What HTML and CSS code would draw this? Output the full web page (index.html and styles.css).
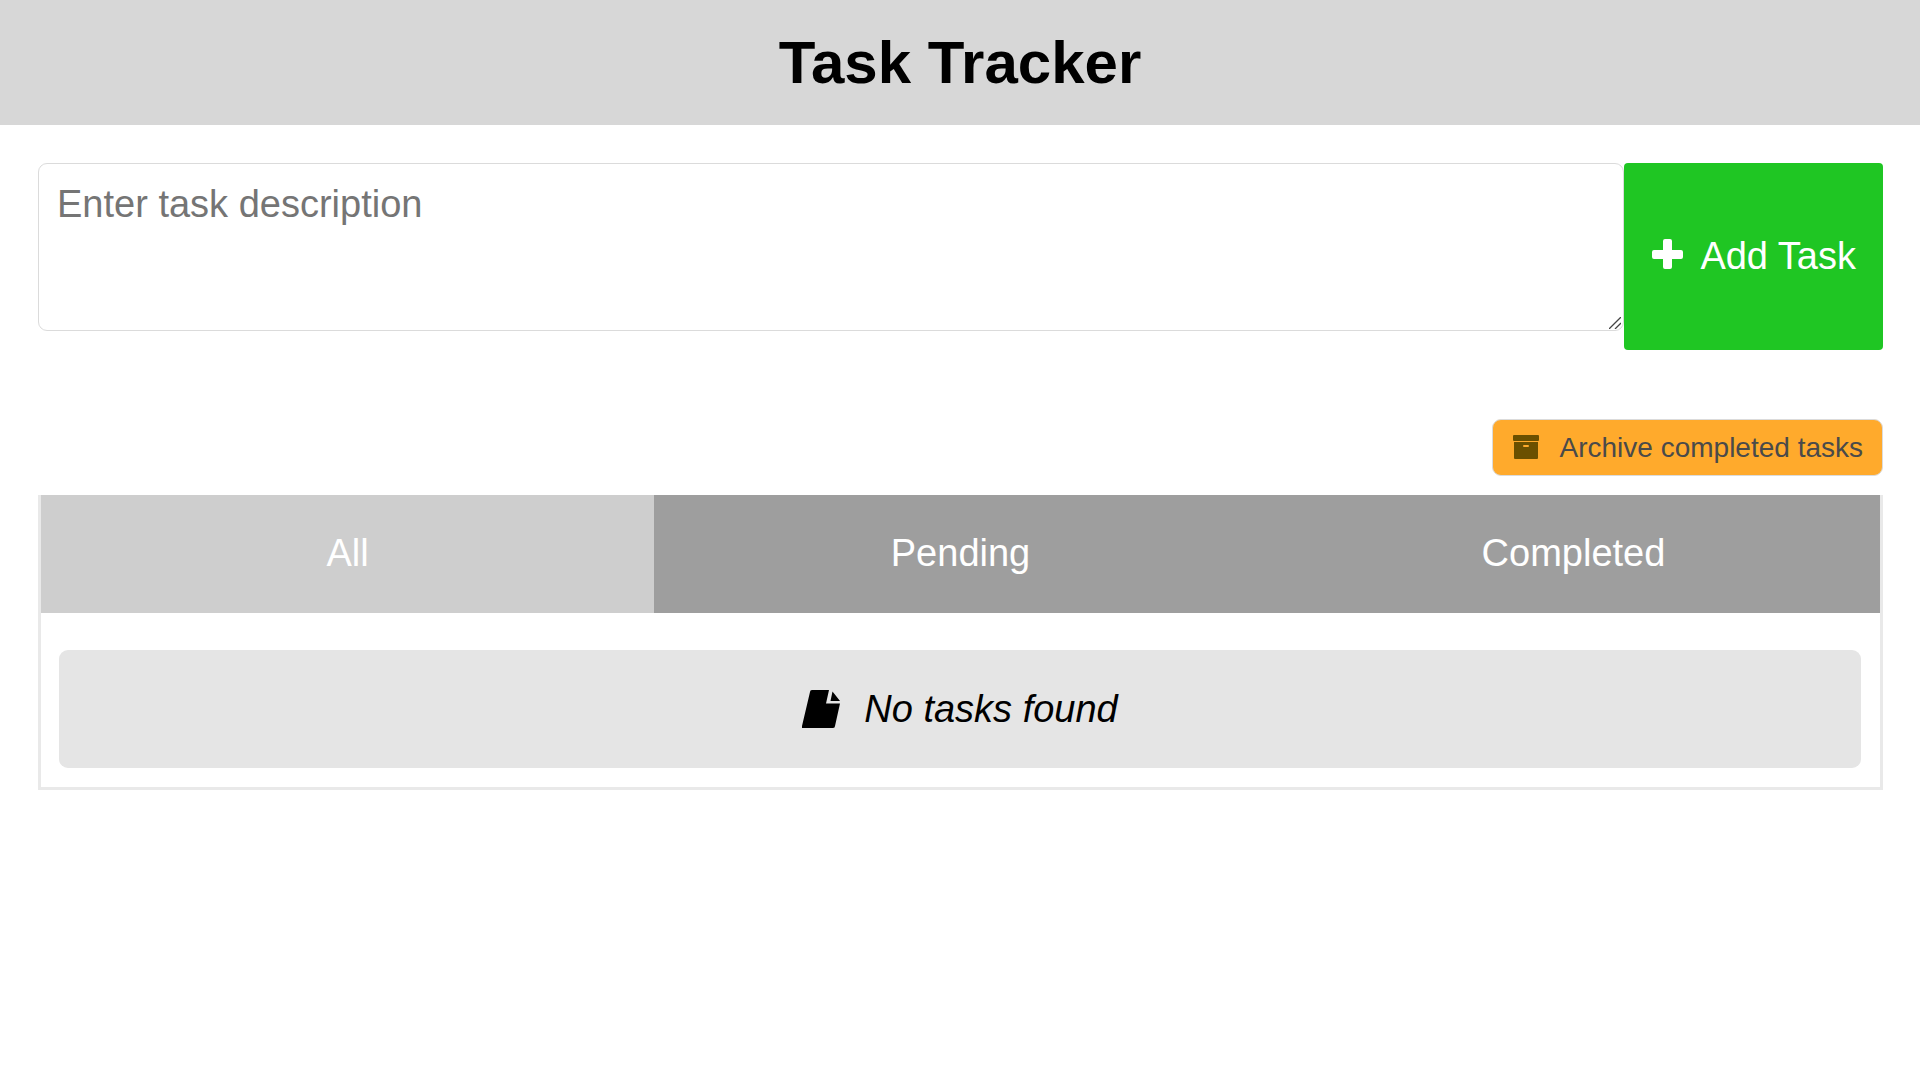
FILE: index.html
```html
<!DOCTYPE html>
<html lang="en">
<head>
<meta charset="utf-8">
<meta name="viewport" content="width=device-width, initial-scale=1">
<title>Task Tracker</title>
<link rel="stylesheet" href="styles.css">
</head>
<body>
<header class="header">
  <h1 class="title">Task Tracker</h1>
</header>
<main class="content">
  <form class="task-form">
    <div class="task-field">
      <textarea class="task-input" aria-label="Task description" placeholder="Enter task description"></textarea>
      <svg class="grip" viewBox="0 0 12 12" aria-hidden="true"><path stroke="currentColor" stroke-width="1.3" fill="none" d="M0 12L12 0M6 12l6-6"/></svg>
    </div>
    <button class="add-button" type="button">
      <svg class="icon-plus" viewBox="0 0 31 30" aria-hidden="true"><path fill="currentColor" d="M13 0h5a2 2 0 0 1 2 2v9h9a2 2 0 0 1 2 2v5a2 2 0 0 1-2 2h-9v8a2 2 0 0 1-2 2h-5a2 2 0 0 1-2-2v-8H2a2 2 0 0 1-2-2v-5a2 2 0 0 1 2-2h9V2a2 2 0 0 1 2-2z"/></svg>
      <span>Add Task</span>
    </button>
  </form>
  <div class="toolbar">
    <button class="archive-button" type="button">
      <svg class="icon-archive" viewBox="0 0 26 24" aria-hidden="true"><path fill="currentColor" fill-rule="evenodd" d="M1 0h24a1 1 0 0 1 1 1v4a1 1 0 0 1-1 1H1a1 1 0 0 1-1-1V1a1 1 0 0 1 1-1zM1 7h24v16a1 1 0 0 1-1 1H2a1 1 0 0 1-1-1zM11 10a1 1 0 0 0 0 2h4a1 1 0 0 0 0-2z"/></svg>
      <span>Archive completed tasks</span>
    </button>
  </div>
  <section class="panel">
    <nav class="tabs">
      <button class="tab tab-active" type="button">All</button>
      <button class="tab" type="button">Pending</button>
      <button class="tab" type="button">Completed</button>
    </nav>
    <div class="panel-body">
      <p class="empty">
        <svg class="icon-file" viewBox="0 0 38 38" aria-hidden="true"><path fill="currentColor" d="M10 0h17l-3 13.500h14l-5 22.500a2 2 0 0 1-2 2H1a1 1 0 0 1-1-2L8 2a2 2 0 0 1 2-2zM30.500 1.500l7.500 9.500h-9.500z"/></svg>
        <span>No tasks found</span>
      </p>
    </div>
  </section>
</main>
</body>
</html>
```
FILE: styles.css
```css
* {
  box-sizing: border-box;
}

body {
  margin: 0;
  background: #fff;
  color: #000;
  font-family: "Liberation Sans", Arial, sans-serif;
  font-size: 38px;
  line-height: 42px;
}

button,
textarea {
  margin: 0;
  font: inherit;
}

svg {
  flex: none;
}

.header {
  padding: 28px 38px;
  background: #d7d7d7;
}

.title {
  margin: 0;
  font-size: 60px;
  line-height: 69px;
  text-align: center;
}

.content {
  padding: 38px 37px 38px 38px;
}

.task-form {
  display: flex;
  align-items: stretch;
}

.task-field {
  position: relative;
  flex: 1;
  min-width: 0;
  padding-bottom: 19px;
}

.task-input {
  display: block;
  width: 100%;
  height: 168px;
  padding: 19px 18px;
  border: 1px solid #dbdbdb;
  border-radius: 9px;
  background: #fff;
  color: #000;
  resize: none;
}

.task-input::placeholder {
  color: #757575;
}

.grip {
  position: absolute;
  right: 3px;
  bottom: 21px;
  width: 12px;
  height: 12px;
  color: #444;
  pointer-events: none;
}

.add-button {
  display: flex;
  align-items: center;
  gap: 17px;
  padding: 0 27px 2px 28px;
  border: 0;
  border-radius: 4px;
  background: #1fc623;
  color: #fff;
  white-space: nowrap;
}

.icon-plus {
  width: 31px;
  height: 30px;
  margin-bottom: 4px;
}

.toolbar {
  display: flex;
  justify-content: flex-end;
  padding: 69px 0 19px;
}

.archive-button {
  display: flex;
  align-items: center;
  gap: 21px;
  padding: 12px 19px 12px 20px;
  border: 1px solid #dbdbdb;
  border-radius: 9px;
  background: #ffaa2c;
  color: #4a4a4a;
  font-size: 28px;
  line-height: 31px;
}

.icon-archive {
  width: 26px;
  height: 24px;
  margin-bottom: 2px;
  color: #6b5000;
}

.panel {
  border: 3px solid #e9e9e9;
  border-top: 0;
}

.tabs {
  display: grid;
  grid-template-columns: repeat(3, 1fr);
}

.tab {
  padding: 37px 18px 39px;
  border: 0;
  background: #9e9e9e;
  color: #fff;
}

.tab-active {
  background: #cecece;
}

.panel-body {
  padding: 37px 19px 19px 18px;
}

.empty {
  display: flex;
  align-items: center;
  justify-content: center;
  gap: 24px;
  margin: 0;
  padding: 38px 18px;
  border-radius: 9px;
  background: #e5e5e5;
  font-style: italic;
}

.icon-file {
  width: 38px;
  height: 38px;
}
```
